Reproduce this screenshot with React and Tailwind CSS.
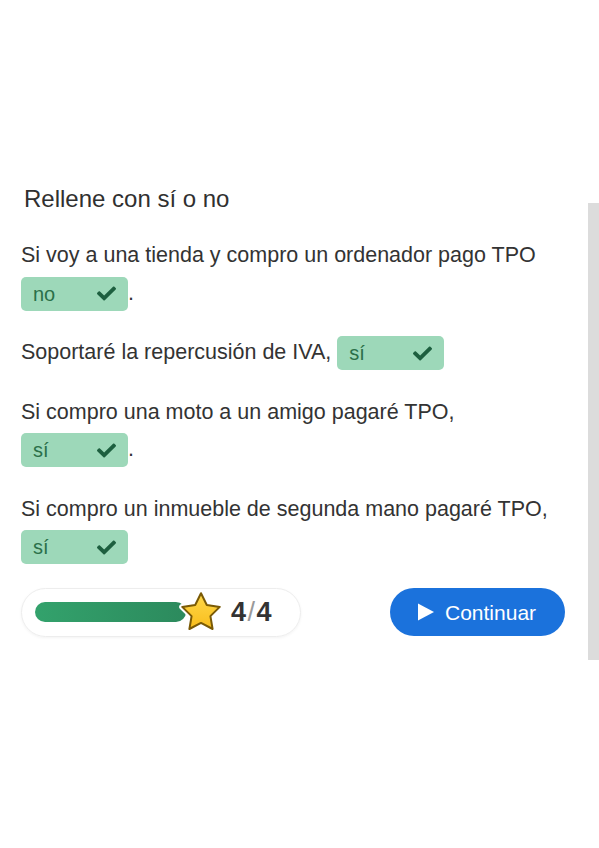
import { FaCheck } from 'react-icons/fa'

const FONT = { fontFamily: '"Liberation Sans", Arial, sans-serif' }

function Answer({ value }) {
  return (
    <span className="inline-flex items-center justify-between align-middle w-[107px] h-[34px] pl-3 pr-[12px] rounded-[5px] bg-[#9dd8b9] text-[#2b7049] text-[20px] leading-none">
      <span>{value}</span>
      <FaCheck className="text-[#1d5f3f] w-[19px] h-[19px]" />
    </span>
  )
}

function Star() {
  return (
    <svg viewBox="0 0 24 24" className="w-[48px] h-[48px] -ml-[9px] shrink-0">
      <defs>
        <linearGradient id="starFill" x1="0" y1="0" x2="0" y2="1">
          <stop offset="0" stopColor="#ffd84a" />
          <stop offset="1" stopColor="#f8bd1c" />
        </linearGradient>
      </defs>
      <path
        d="M12 2.6l2.9 5.9 6.5.95-4.7 4.6 1.1 6.45L12 17.45l-5.8 3.05 1.1-6.45-4.7-4.6 6.5-.95z"
        fill="none"
        stroke="#ffffff"
        strokeWidth="3"
        strokeLinejoin="round"
      />
      <path
        d="M12 2.6l2.9 5.9 6.5.95-4.7 4.6 1.1 6.45L12 17.45l-5.8 3.05 1.1-6.45-4.7-4.6 6.5-.95z"
        fill="url(#starFill)"
        stroke="#7a5a06"
        strokeWidth="1"
        strokeLinejoin="round"
      />
    </svg>
  )
}

export default function App() {
  return (
    <div className="w-[599px] h-[848px] bg-white flex text-[#333]" style={FONT}>
      <div className="flex-1 pl-[21px] pr-[23px] pt-[184px]">
        <h1 className="text-[24px] leading-[30px] pl-[3px] text-[#303030]">Rellene con sí o no</h1>

        <div className="mt-[23px] text-[21.5px] leading-[37.5px] space-y-[22px]">
          <p>
            Si voy a una tienda y compro un ordenador pago TPO <Answer value="no" />.
          </p>
          <p>
            Soportaré la repercusión de IVA, <Answer value="sí" />
          </p>
          <p>
            Si compro una moto a un amigo pagaré TPO, <Answer value="sí" />.
          </p>
          <p>
            Si compro un inmueble de segunda mano pagaré TPO, <Answer value="sí" />
          </p>
        </div>

        <div className="mt-[22px] flex items-center justify-between">
          {/* Progress */}
          <div className="w-[280px] h-[49px] rounded-full border border-[#ededed] shadow-[0_1px_3px_rgba(0,0,0,0.05)] flex items-center pl-[13px]">
            <div className="w-[151px] h-[20px] rounded-full bg-gradient-to-r from-[#33a26c] to-[#2c8a5d]" />
            <Star />
            <div className="ml-[6px] text-[27px] font-bold leading-none tracking-[1.5px]">
              4<span className="text-[#9a9a9a] font-normal">/</span>4
            </div>
          </div>

          {/* Continue */}
          <button className="w-[175px] h-[48px] rounded-full bg-[#1b72dc] text-white flex items-center pl-[27px] gap-[10px]">
            <svg viewBox="0 0 18 20" className="w-[18px] h-[20px]">
              <path d="M1 1.5v17l16-8.5z" fill="#ffffff" />
            </svg>
            <span className="text-[21px] leading-none">Continuar</span>
          </button>
        </div>
      </div>
      <div className="w-[11px] mt-[203px] h-[457px] bg-[#dcdcdc]" />
    </div>
  )
}
